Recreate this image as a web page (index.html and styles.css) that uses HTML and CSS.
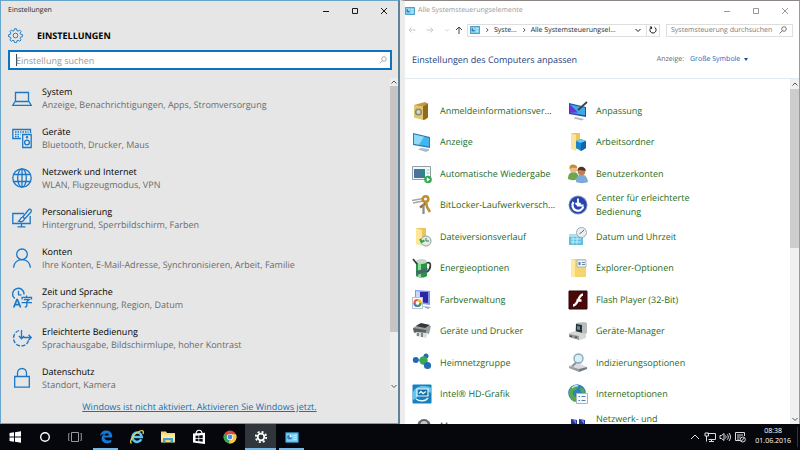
FILE: index.html
```html
<!DOCTYPE html>
<html lang="de">
<head>
  <meta charset="UTF-8">
  <title>Einstellungen</title>
  <meta name="viewport" content="width=device-width, initial-scale=1.0">
  <link rel="stylesheet" href="styles.css">
</head>
<body>

  <!-- Shared symbols -->
  <svg class="defs" aria-hidden="true">
    <symbol id="i-min" viewBox="0 0 8 8"><path d="M1 4.5h6" /></symbol>
    <symbol id="i-max" viewBox="0 0 8 8"><path d="M1.5 1.5h5v5h-5z" /></symbol>
    <symbol id="i-close" viewBox="0 0 8 8"><path d="M1 1l6 6M7 1L1 7" /></symbol>
    <symbol id="i-up" viewBox="0 0 8 8"><path d="M1.5 5.5L4 3l2.500 2.500" /></symbol>
    <symbol id="i-down" viewBox="0 0 8 8"><path d="M1.500 3L4 5.500 6.500 3" /></symbol>
    <symbol id="i-right" viewBox="0 0 8 8"><path d="M3 1.500L5.500 4 3 6.500" /></symbol>
    <symbol id="i-search" viewBox="0 0 8 8"><circle cx="5" cy="3" r="2.300" /><path d="M3.400 4.700L.7 7.400" /></symbol>
    <symbol id="i-panel" viewBox="0 0 20 16">
      <rect x=".5" y=".5" width="19" height="15" rx="1" fill="#3fa9da" stroke="#256f9b" />
      <rect x="2" y="2" width="16" height="12" fill="#7fd0ee" />
      <circle cx="6.500" cy="7.500" r="3.500" fill="#2c7fb8" /><path d="M6.500 7.500V4a3.500 3.500 0 0 1 3.500 3.500z" fill="#fff" />
      <path d="M12 5h5M12 8h5M12 11h5" stroke="#d8f1fb" stroke-width="1.200" />
    </symbol>
    <symbol id="i-gear" viewBox="0 0 16 16">
      <path d="M6.900.8h2.200l.4 2 1.300.5 1.700-1.100 1.500 1.500-1.100 1.700.5 1.300 2 .4v2.200l-2 .4-.5 1.300 1.100 1.700-1.500 1.500-1.700-1.100-1.300.5-.4 2H6.900l-.4-2-1.300-.5-1.700 1.100L2 12.700 3.100 11l-.5-1.300-2-.4V7.100l2-.4.5-1.300L2 3.700l1.500-1.500 1.700 1.100 1.300-.5z" />
      <circle cx="8" cy="8" r="2.500" />
    </symbol>
  </svg>

  <main class="desktop">

    <!-- Settings window -->
    <section class="window settings">
      <div class="titlebar">
        <span class="title">Einstellungen</span>
        <div class="controls">
          <button aria-label="Minimieren"><svg><use href="#i-min" /></svg></button>
          <button aria-label="Maximieren"><svg><use href="#i-max" /></svg></button>
          <button aria-label="Schließen"><svg><use href="#i-close" /></svg></button>
        </div>
      </div>

      <div class="settings-head">
        <svg class="gear"><use href="#i-gear" /></svg>
        <h1>EINSTELLUNGEN</h1>
      </div>

      <label class="settings-search">
        <input type="text" placeholder="Einstellung suchen" aria-label="Einstellung suchen">
        <svg><use href="#i-search" /></svg>
      </label>

      <div class="settings-body">
        <nav class="settings-list">
          <a href="#" class="setting">
            <svg viewBox="0 0 20 20"><path d="M3.500 4.500h13v9h-13zM3 13.500L.8 17.300h18.400L17 13.500" /></svg>
            <span><b>System</b><small>Anzeige, Benachrichtigungen, Apps, Stromversorgung</small></span>
          </a>
          <a href="#" class="setting">
            <svg viewBox="0 0 20 20"><path d="M9 10.500H.8v-9h17.700V5" /><path d="M3 4h13.500M3 6.500h5.500M3 8.700h5" stroke-dasharray="1.500 1" /><path d="M10.700 6.500h8.500v13h-8.500z" /><circle cx="15" cy="14.500" r="2.400" /><circle cx="15" cy="9.200" r=".6" /></svg>
            <span><b>Geräte</b><small>Bluetooth, Drucker, Maus</small></span>
          </a>
          <a href="#" class="setting">
            <svg viewBox="0 0 20 20"><circle cx="10" cy="10" r="9.200" /><ellipse cx="10" cy="10" rx="4.300" ry="9.200" /><path d="M10 .8v18.400M1.800 6.500h16.400M1.800 13.500h16.400" /></svg>
            <span><b>Netzwerk und Internet</b><small>WLAN, Flugzeugmodus, VPN</small></span>
          </a>
          <a href="#" class="setting">
            <svg viewBox="0 0 20 20"><path d="M12 5.500H.8v10h17.400V8M9.500 15.500v3M5.500 18.800h8" /><path d="M18.800 1.500c-.9-.8-1.700-.2-2.300.5l-5.700 6.800 2 1.900 6-6.500c.8-.9.700-2 0-2.700z" /><path d="M10.600 9.300c-2.600-.3-2 3-4 3.900 2.500 1.300 5.700.2 5.700-2.400" /></svg>
            <span><b>Personalisierung</b><small>Hintergrund, Sperrbildschirm, Farben</small></span>
          </a>
          <a href="#" class="setting">
            <svg viewBox="0 0 20 20"><circle cx="10" cy="6.300" r="5.300" /><path d="M1.500 19.700c.5-5 4-8.100 8.500-8.100s8 3.100 8.500 8.100" /></svg>
            <span><b>Konten</b><small>Ihre Konten, E-Mail-Adresse, Synchronisieren, Arbeit, Familie</small></span>
          </a>
          <a href="#" class="setting">
            <svg viewBox="0 0 20 20"><path d="M2.800 10.500A5.700 5.700 0 1 1 12 6.500M6.500 2.800v4h3" /><path d="M1.700 19.500l3.200-8h.5l3.200 8M3 16.700h4.500" stroke-width="1.700" /><path d="M14.500 7.500V9M10 11.500V9.300h9.500v2.200M11.800 11.500h5.500l-2.500 2.200v4.300c0 .9-.6 1-2 1M9.500 14.700H20" /></svg>
            <span><b>Zeit und Sprache</b><small>Spracherkennung, Region, Datum</small></span>
          </a>
          <a href="#" class="setting">
            <svg viewBox="0 0 20 20"><path d="M7 2.500A8 8 0 0 0 8.500 18c4 .2 7-2 8-5.500" stroke-dasharray="4 1.500" /><path d="M9.500 2v8.500M7 8l2.500 2.700L12 8M11.500 9.500h8M16.500 6.800l2.700 2.700-2.700 2.700" /></svg>
            <span><b>Erleichterte Bedienung</b><small>Sprachausgabe, Bildschirmlupe, hoher Kontrast</small></span>
          </a>
          <a href="#" class="setting">
            <svg viewBox="0 0 20 20"><path d="M2.700 8.500h14.600v10.700H2.700zM5.500 8.500V5a4.500 4.500 0 0 1 9 0v3.500" /></svg>
            <span><b>Datenschutz</b><small>Standort, Kamera</small></span>
          </a>
        </nav>
        <div class="scrollbar">
          <svg><use href="#i-up" /></svg>
          <div class="track"><div class="thumb"></div></div>
          <svg><use href="#i-down" /></svg>
        </div>
      </div>

      <footer class="activate"><a href="#">Windows ist nicht aktiviert. Aktivieren Sie Windows jetzt.</a></footer>
    </section>

    <!-- Control panel window -->
    <section class="window panel">
      <div class="titlebar">
        <svg class="panel-icon"><use href="#i-panel" /></svg>
        <span class="title">Alle Systemsteuerungselemente</span>
        <div class="controls">
          <button aria-label="Minimieren"><svg><use href="#i-min" /></svg></button>
          <button aria-label="Maximieren"><svg><use href="#i-max" /></svg></button>
          <button aria-label="Schließen"><svg><use href="#i-close" /></svg></button>
        </div>
      </div>

      <div class="toolbar">
        <div class="history">
          <button aria-label="Zurück"><svg viewBox="0 0 8 8"><path d="M7.500 4H1M3.500 1.500L1 4l2.500 2.500" /></svg></button>
          <button aria-label="Vorwärts"><svg viewBox="0 0 8 8"><path d="M.5 4H7M4.500 1.500L7 4 4.500 6.500" /></svg></button>
          <button class="recent" aria-label="Verlauf"><svg><use href="#i-down" /></svg></button>
          <button class="go-up" aria-label="Nach oben"><svg viewBox="0 0 8 8"><path d="M4 8V1M1 4l3-3 3 3" /></svg></button>
        </div>
        <div class="address">
          <svg class="panel-icon"><use href="#i-panel" /></svg>
          <svg class="sep"><use href="#i-right" /></svg>
          <span>Syste...</span>
          <svg class="sep"><use href="#i-right" /></svg>
          <span>Alle Systemsteuerungsel...</span>
          <button class="drop" aria-label="Adressliste"><svg><use href="#i-down" /></svg></button>
          <button class="reload" aria-label="Aktualisieren"><svg viewBox="0 0 8 8"><path d="M5.500 1.200A3.100 3.100 0 1 1 2.300 1.300M2.600 3V1H.8" /></svg></button>
        </div>
        <label class="panel-search">
          <input type="text" placeholder="Systemsteuerung durchsuchen" aria-label="Systemsteuerung durchsuchen">
          <svg><use href="#i-search" /></svg>
        </label>
      </div>

      <div class="panel-head">
        <h2>Einstellungen des Computers anpassen</h2>
        <div class="view">
          <label for="view">Anzeige:</label>
          <select id="view"><option>Große Symbole</option></select>
          <span class="caret"></span>
        </div>
      </div>

      <div class="panel-body">
        <div class="items">
          <a href="#">
            <svg viewBox="0 0 20 20"><path d="M2 4l11-3 3 1.500v14L13 19 2 16z" fill="#c39a3c" /><path d="M2 4l9 1.500V19L2 16.500z" fill="#e3c56e" /><path d="M11 5.500l5-3v14L11 19z" fill="#8f6b22" /><circle cx="6.500" cy="11" r="3.600" fill="#8b8778" /><circle cx="6.500" cy="11" r="2" fill="#ded8c0" /></svg>
            <span>Anmeldeinformationsver...</span>
          </a>
          <a href="#">
            <svg viewBox="0 0 20 20"><path d="M1 2l17 4v10L1 13z" fill="#234fae" /><path d="M2 3.500l15 3.300v7.500L2 11.800z" fill="#3daae8" /><path d="M2 3.500l8 8-8 .3z" fill="#7131d2" /><path d="M7 16l9 2-2 1.500-8-2z" fill="#aeb7c0" /><path d="M19 1l-9 8" stroke="#3d414b" stroke-width="1.800" /></svg>
            <span>Anpassung</span>
          </a>
          <a href="#">
            <svg viewBox="0 0 20 20"><path d="M1 1l17 4v11L1 13z" fill="#2b7cba" /><path d="M2 2.500l15 3.500v8.500L2 11.800z" fill="#42b7ed" /><path d="M2 2.500l10 2.300-5 7.900-5-.9z" fill="#8ddafa" /><path d="M9 16l8 1v1.500L14 20l-8-2.500z" fill="#a6bfce" /></svg>
            <span>Anzeige</span>
          </a>
          <a href="#">
            <svg viewBox="0 0 20 20"><path d="M3 1h9v16H3z" fill="#edc55c" /><path d="M3 1l5 2v16l-5-2z" fill="#fce49a" /><path d="M8 9l5-2 5 2v7l-5 3-5-3z" fill="#1786cf" /><path d="M8 9l5 2 5-2-5-2z" fill="#6bc8f4" /><path d="M13 11v8l5-3V9z" fill="#1263a7" /></svg>
            <span>Arbeitsordner</span>
          </a>
          <a href="#">
            <svg viewBox="0 0 20 20"><path d="M.5 2.500h18v13H.5z" fill="#f4f7f7" stroke="#92a0a6" /><path d="M2 5h11v9H2z" fill="#2d8588" /><path d="M2 5h4l5 9H2z" fill="#4a729e" /><path d="M14.500 6h3M14.500 9h3" stroke="#b1bec5" /><circle cx="16" cy="15.500" r="3.800" fill="#34a853" /><path d="M14.800 13.300v4.400l3.200-2.200z" fill="#fff" /></svg>
            <span>Automatische Wiedergabe</span>
          </a>
          <a href="#">
            <svg viewBox="0 0 20 20"><path d="M0 15c0-5 2-7 5.500-7s5 2 5 7c-3 1.500-8 1.500-10.500 0z" fill="#6fa64d" /><circle cx="5.500" cy="5" r="3.800" fill="#e7bc8c" /><path d="M1.500 5C1 1 4 0 6.500.7S9.500 3 9 4C6 4 4 3 1.500 5z" fill="#c68e31" /><path d="M8 18c0-5 2-7.500 5.500-7.500S19.500 13 20 18c-3 1.500-9 1.500-12 0z" fill="#7eaadb" /><circle cx="13.500" cy="7.500" r="3.800" fill="#bd8057" /><path d="M9.500 7c0-4 3-5 5.500-4s3 3 2.500 4c-3 0-5-2-8 0z" fill="#513326" /></svg>
            <span>Benutzerkonten</span>
          </a>
          <a href="#">
            <svg viewBox="0 0 20 20"><path d="M0 5.500l11-2M1 8l10-2" stroke="#a8a59b" stroke-width="1.700" /><circle cx="13.500" cy="4" r="2.800" fill="none" stroke="#c08c2c" stroke-width="2.500" /><path d="M14 8l-6 4.500" fill="none" stroke="#a26a1c" stroke-width="2.300" /><path d="M11.500 9v10" stroke="#858b90" stroke-width="2.200" /><path d="M14 7l1 5 3 5" stroke="#c2902f" fill="none" stroke-width="2.500" /></svg>
            <span>BitLocker-Laufwerkversch...</span>
          </a>
          <a href="#">
            <svg viewBox="0 0 20 20"><circle cx="10" cy="10" r="9.500" fill="#8794bd" /><circle cx="10" cy="10" r="8.600" fill="#2544ad" /><path d="M5.500 7A5.500 5.500 0 1 0 15.300 11.500" fill="none" stroke="#fff" stroke-width="2.200" /><path d="M10 3.500v7h5.500M7.500 8l2.500 2.500L12.500 8" fill="none" stroke="#fff" stroke-width="1.800" /></svg>
            <span>Center für erleichterte Bedienung</span>
          </a>
          <a href="#">
            <svg viewBox="0 0 20 20"><path d="M4 1h10v16H4z" fill="#ebc45c" /><path d="M4 1l6 2v16l-6-2z" fill="#ffe69a" /><circle cx="14" cy="14" r="5" fill="#e2ede6" stroke="#8da19a" /><path d="M14 11v3h3" fill="none" stroke="#4c6e70" /><path d="M8 12l1.500 3 3-1.500" fill="none" stroke="#35a447" stroke-width="2" /></svg>
            <span>Dateiversionsverlauf</span>
          </a>
          <a href="#">
            <svg viewBox="0 0 20 20"><path d="M1 7h14v11H1z" fill="#63bfe0" /><path d="M1 7h14v3H1z" fill="#a4e1f3" /><path d="M3 12h10M3 15h10M5 10v7M9 10v7" stroke="#c6edf8" /><circle cx="13.500" cy="5.500" r="5" fill="#e9eef0" stroke="#9fabb3" /><path d="M13.500 5.500L16 3M13.500 5.500l-2 1" stroke="#58656d" /></svg>
            <span>Datum und Uhrzeit</span>
          </a>
          <a href="#">
            <svg viewBox="0 0 20 20"><path d="M4 4c3-2 8-2 11 0v14c-3 2-8 2-11 0z" fill="#279544" /><path d="M6 4h3v15H6z" fill="#8bdb9a" /><ellipse cx="9.500" cy="3.500" rx="5.500" ry="2.500" fill="#c8d3ca" /><path d="M15 5c5-2 4 6 0 9M1 1l4 5" fill="none" stroke="#303b35" stroke-width="1.700" /><path d="M4 13l12-3-2 4-9 3z" fill="#4b6470" /></svg>
            <span>Energieoptionen</span>
          </a>
          <a href="#">
            <svg viewBox="0 0 20 20"><path d="M3 1h15v18H3z" fill="#f3d672" /><path d="M3 1l4 1v17H3z" fill="#ffe99c" /><path d="M9 2h9v7H9z" fill="#f1f5f8" stroke="#9dabb5" stroke-width=".8" /><path d="M10.500 4h2v3h-2z" fill="#3e84b9" /><path d="M14 4.500h3M14 6.500h3" stroke="#718391" /></svg>
            <span>Explorer-Optionen</span>
          </a>
          <a href="#">
            <svg viewBox="0 0 20 20"><path d="M3 0l15 1v14L3 13z" fill="#7d97ea" /><path d="M4 1l5 1v10H4z" fill="#cbd6fa" /><path d="M8 2l8 0v11l-8-1z" fill="#2c25a5" /><path d="M10 16l9 1-3 2z" fill="#9aa7b2" /><rect x=".5" y="7.500" width="10" height="11" fill="#fff" stroke="#b9c1cc" /><circle cx="5.500" cy="13" r="3" fill="none" stroke="#e95342" stroke-width="2" /><path d="M5.500 10a3 3 0 0 1 3 3" fill="none" stroke="#f4c51e" stroke-width="2" /><path d="M8.500 13a3 3 0 0 1-3 3" fill="none" stroke="#2aa867" stroke-width="2" /><path d="M5.500 16a3 3 0 0 1-3-3" fill="none" stroke="#3a83e5" stroke-width="2" /></svg>
            <span>Farbverwaltung</span>
          </a>
          <a href="#">
            <svg viewBox="0 0 20 20"><path d="M1 1h18v18H1z" fill="#4b0808" stroke="#27090a" /><path d="M15 4.500c-5 0-4.500 11-10 11M8.500 10.500h5" fill="none" stroke="#fff" stroke-width="2.300" /></svg>
            <span>Flash Player (32-Bit)</span>
          </a>
          <a href="#">
            <svg viewBox="0 0 20 20"><path d="M1 7l6-4 12 2-2 8-15-1z" fill="#9b9e9f" /><path d="M4 5l5-3 9 2-5 3z" fill="#34383a" /><path d="M1 7l13 2v4L2 11z" fill="#5a5f61" /><path d="M4 11l12 1-2 5-10-2z" fill="#d9dcdd" /><path d="M6 12v3M10 12v4" stroke="#62676a" stroke-width="1.500" /></svg>
            <span>Geräte und Drucker</span>
          </a>
          <a href="#">
            <svg viewBox="0 0 20 20"><path d="M8 2l8-1 3 1v10l-4 2-8-2z" fill="#b9bdbd" /><path d="M8 3l6 1v8l-6-1z" fill="#263236" /><path d="M9 5l3 .5V9L9 8.500z" fill="#5c938f" /><path d="M1 12l6-2 11 3v4l-6 2-11-3z" fill="#d4d7d7" /><path d="M1 13l10 2v4L1 16z" fill="#92999a" /><path d="M3 14.500v1.500M8 15.500V17" stroke="#333b3c" stroke-width="1.500" /></svg>
            <span>Geräte-Manager</span>
          </a>
          <a href="#">
            <svg viewBox="0 0 20 20"><path d="M4 7l7 0 4 5M11 7l3-4" fill="none" stroke="#9baab2" stroke-width="1.500" /><circle cx="3.800" cy="7" r="3" fill="#2368b5" /><circle cx="14" cy="3" r="2.500" fill="#296aa8" /><circle cx="11.500" cy="7.500" r="4.200" fill="#37a855" /><circle cx="15.500" cy="12.500" r="3.600" fill="#246bb3" /></svg>
            <span>Heimnetzgruppe</span>
          </a>
          <a href="#">
            <svg viewBox="0 0 20 20"><path d="M1 13l9-3 9 4-8 4z" fill="#d8dcde" /><path d="M1 13l10 3v3L1 15z" fill="#969ea3" /><path d="M11 16l8-2v2l-8 3z" fill="#717b81" /><circle cx="10.500" cy="5.500" r="4.500" fill="#d6eff9" stroke="#83a5b7" stroke-width="1.300" /><path d="M8 9.500l-4 4" stroke="#86959d" stroke-width="2" /></svg>
            <span>Indizierungsoptionen</span>
          </a>
          <a href="#">
            <svg viewBox="0 0 20 20"><rect x=".5" y=".5" width="19" height="19" rx="1" fill="#1681bf" /><path d="M1 8C4 1 15 1 19 4v5c-5-4-13-2-14 5l-4 2z" fill="#63c7ec" /><path d="M5 5h11v7H5z" fill="#176ca4" stroke="#e9f7ff" stroke-width="1.200" /><path d="M7 9.500l2-2 2 2 3-2M4 15c4 3 10 2 12-1" fill="none" stroke="#e9f7ff" stroke-width="1.400" /></svg>
            <span>Intel® HD-Grafik</span>
          </a>
          <a href="#">
            <svg viewBox="0 0 20 20"><circle cx="9" cy="9" r="8.800" fill="#2e80bf" /><path d="M3 3c3-2 6-3 7-1l-2 4-3 1v4l4 3-2 4C1 16-1 8 3 3zM12 3l4 2 1 5-4-2z" fill="#56aa4b" /><path d="M4 4c2-2 4-3 6-2" fill="none" stroke="#bfe3ef" stroke-width="1.500" /><path d="M8.500 9.500h11v10h-11z" fill="#f8fafb" stroke="#a8b6c1" /><path d="M10.500 12.500h1.500M10.500 16.500h1.500M13.500 12.500h4M13.500 16.500h4" stroke="#4c83ac" /></svg>
            <span>Internetoptionen</span>
          </a>
          <a href="#">
            <svg viewBox="0 0 20 20"><ellipse cx="12" cy="11" rx="7" ry="8" fill="#5e666b" /><ellipse cx="12" cy="8" rx="3.500" ry="3" fill="#c2c8cb" /></svg>
            <span>Maus</span>
          </a>
          <a href="#">
            <svg viewBox="0 0 20 20"><path d="M3 3l6 1v7l-6-1zM11 3l6 1v7l-6-1z" fill="#20349c" /><path d="M5 4l3 .5V8zM13 4l3 .5V8z" fill="#7790e2" /><path d="M1 12h17v3H1z" fill="#8992a5" /></svg>
            <span>Netzwerk- und Freigabecenter</span>
          </a>
        </div>
        <div class="scrollbar">
          <svg><use href="#i-up" /></svg>
          <div class="track"><div class="thumb"></div></div>
          <svg><use href="#i-down" /></svg>
        </div>
      </div>
    </section>
  </main>

  <!-- Taskbar -->
  <footer class="taskbar">
    <div class="apps">
      <button aria-label="Start"><svg viewBox="0 0 16 16"><path d="M2.500 4L7 3.300v4.200H2.500zM8 3.200l6-.9v5.200H8zM2.500 8.500H7v4.200L2.500 12zM8 8.500h6v5.200l-6-.9z" fill="#fff" /></svg></button>
      <button aria-label="Cortana"><svg viewBox="0 0 16 16"><circle cx="8" cy="8" r="4.300" fill="none" stroke="#fff" stroke-width="1.400" /></svg></button>
      <button aria-label="Taskansicht"><svg viewBox="0 0 16 16"><path d="M4.500 3.500h7v9h-7zM2.500 4.500h-.8v7h.8M13.500 4.500h.8v7h-.8" fill="none" stroke="#999" /></svg></button>
      <button class="app open" aria-label="Edge"><svg viewBox="0 0 16 16"><path d="M2 7C2.500 3.500 5 1.500 8.500 1.500c4 0 6 3 5.700 7H6.300c.3 3.300 4.300 3.700 7 2.200v2.600C8.500 16 3.500 13.500 3.600 9.600c0-2 1.100-3.600 2.800-4.600C4.500 5 3 5.700 2 7zm4.500-.6h4.300C10.800 3.500 6.900 3.700 6.500 6.400z" fill="#1578d4" /></svg></button>
      <button class="app" aria-label="Internet Explorer"><svg viewBox="0 0 16 16"><path d="M12.300 10.300A4.700 4.700 0 1 1 12.800 8H4.500" fill="none" stroke="#5bc6ef" stroke-width="2.500" /><path d="M2.500 14.500C-.5 12 5.500 4 11 2c3-1 4 0 3 3" fill="none" stroke="#f2d94d" stroke-width="1.300" /></svg></button>
      <button class="app" aria-label="Explorer"><svg viewBox="0 0 16 16"><path d="M1 2.500h5l1 1.500h8v9.500H1z" fill="#f7d66f" /><path d="M1 5.500h14v5H1z" fill="#ffe9a2" /><path d="M3 9h10v4.500h-2.500V11h-5v2.500H3z" fill="#39a4d7" /></svg></button>
      <button class="app" aria-label="Store"><svg viewBox="0 0 16 16"><path d="M5 5c0-5 6-5 6 0" fill="none" stroke="#fff" stroke-width="1.200" /><path d="M2 4.500l12-.8V15L2 13.500z" fill="#fff" /><path d="M4.500 6.800L7.500 6.500V9h-3zM8.200 6.500l3.500-.4V9H8.200zM4.500 9.700h3v2.600l-3-.3zM8.200 9.700h3.500v3l-3.500-.4z" fill="#090b10" /></svg></button>
      <button class="app" aria-label="Chrome"><svg viewBox="0 0 16 16"><circle cx="8" cy="8" r="6.500" fill="#dd4b3e" /><path d="M8 8L2.300 4.900A6.500 6.500 0 0 0 7 14.400z" fill="#35a853" /><path d="M8 8L7 14.400A6.500 6.500 0 0 0 13.900 5.300H8z" fill="#f9cb3c" /><circle cx="8" cy="8" r="3.100" fill="#fff" /><circle cx="8" cy="8" r="2.400" fill="#478bee" /></svg></button>
      <button class="app open active" aria-label="Einstellungen"><svg viewBox="0 0 16 16"><circle cx="8" cy="8" r="3.300" fill="none" stroke="#fff" stroke-width="1.800" /><circle cx="8" cy="8" r="5.200" fill="none" stroke="#fff" stroke-width="1.800" stroke-dasharray="2.040 2.040" /></svg></button>
      <button class="app open" aria-label="Systemsteuerung"><svg class="task-panel"><use href="#i-panel" /></svg></button>
    </div>
    <div class="tray">
      <button aria-label="Ausgeblendete Symbole"><svg viewBox="0 0 12 12"><path d="M2 8l4-4 4 4" /></svg></button>
      <button aria-label="Netzwerk"><svg viewBox="0 0 12 12"><path d="M3.500 2.500h8v6h-7M7.500 8.500v2M5 10.500h5M1 2h3.500v3H1zM2.500 5v5.500" /></svg></button>
      <button aria-label="Lautstärke"><svg viewBox="0 0 12 12"><path d="M1 4.500h1.500L5 2.500v7L2.500 7.500H1zM6.500 4.500c.8 1 .8 2 0 3M8.200 3.300c1.500 1.800 1.500 3.600 0 5.400M10 2c2 2.700 2 5.300 0 8" /></svg></button>
      <button aria-label="Info-Center"><svg viewBox="0 0 12 12"><path d="M6 9.500H1.500v-8h9V5M3 4h6M3 6h3.500M3 8h2.500" /><circle cx="8.800" cy="8.500" r="2.500" /><path d="M7.200 10.200l3.200-3.400" /></svg></button>
      <time class="clock"><span>08:38</span><span>01.06.2016</span></time>
    </div>
  </footer>

</body>
</html>
```
FILE: styles.css
```css
* { box-sizing: border-box; margin: 0; padding: 0; }

body {
  font-family: "Segoe UI", "Open Sans", "Noto Sans", sans-serif;
  font-size: 9px;
  text-rendering: geometricPrecision;
  height: 100vh;
  display: flex;
  flex-direction: column;
  overflow: hidden;
  background: #05070c;
  color: #1a1a1a;
}

a { color: inherit; text-decoration: none; }
button { background: none; border: none; font: inherit; color: inherit; }
input, select { font: inherit; text-rendering: inherit; border: none; outline: none; background: none; min-width: 0; }
svg { display: block; flex: none; width: 8px; height: 8px; overflow: visible; }

.defs { position: absolute; width: 0; height: 0; }

.desktop {
  flex: 1;
  min-height: 0;
  display: flex;
}

.window {
  width: 50%;
  display: flex;
  flex-direction: column;
}

.titlebar {
  display: flex;
  align-items: center;
  height: 19px;
  flex: none;
}

.title { font-size: 7px; flex: 1; }

.controls { display: flex; }

.controls button {
  width: 29px;
  height: 18px;
  display: grid;
  place-items: center;
}

.controls svg, .history svg, .sep, .drop svg, .reload svg, .panel-search svg, .settings-search svg {
  fill: none;
  stroke: currentColor;
}

/* Settings */
.settings {
  background: #e6e6e6;
  border: 1px solid #6aa3c8;
  border-right: 2px solid #5f8299;
}

.settings .titlebar { padding-left: 7px; }

.settings-head {
  display: flex;
  align-items: center;
  gap: 14px;
  height: 30px;
  padding-left: 7px;
}

.gear {
  width: 15px;
  height: 15px;
  fill: none;
  stroke: #1a78c8;
}

h1 { font-size: 9px; font-weight: 700; color: #000; }

.settings-search {
  display: flex;
  align-items: center;
  height: 20px;
  margin: 0 6px 0 7px;
  padding-right: 3px;
  background: #fff;
  border: 2px solid #0f74be;
  color: #aaa;
  flex: none;
}

.settings-search input {
  flex: 1;
  height: 16px;
  font-size: 9px;
  padding-left: 6px;
  background: linear-gradient(#444, #444) 6px center / 1px 12px no-repeat;
}

input::placeholder { color: #999; opacity: 1; }

.settings-body {
  flex: 1;
  min-height: 0;
  display: flex;
  margin-top: 8px;
}

.settings-list {
  flex: 1;
  overflow: hidden;
}

.setting {
  display: flex;
  align-items: center;
  gap: 10px;
  height: 40px;
  padding-left: 11px;
}

.setting svg {
  width: 20px;
  height: 20px;
  fill: none;
  stroke: #1a78c8;
  stroke-width: 1.3;
}

.setting b, .setting small {
  display: block;
  font-size: 9px;
  font-weight: normal;
  line-height: 13px;
  color: #000;
}

.setting small { color: #6b6b6b; }

.scrollbar {
  display: flex;
  flex-direction: column;
  align-items: center;
  width: 8px;
  background: #ededed;
}

.scrollbar svg { fill: none; stroke: #555; }

.track { flex: 1; width: 100%; }

.thumb { background: #c6c4c4; }

.settings .thumb { height: 83%; }

.activate {
  height: 33px;
  display: grid;
  place-items: center;
  flex: none;
}

.activate a { color: #1a70b0; text-decoration: underline; }

/* Control panel */
.panel {
  background: #fff;
  border-top: 1px solid #8d8684;
  border-right: 1px solid #999;
  border-left: 5px solid #ececec;
}

.panel .titlebar { color: #999; gap: 3px; }

.panel-icon { width: 10px; height: 8px; }

.toolbar {
  display: flex;
  align-items: center;
  height: 20px;
  padding-right: 6px;
}

.history {
  display: flex;
  align-items: center;
  width: 62px;
  padding-left: 3px;
  gap: 10px;
  color: #c8c8c8;
}

.history .recent svg { width: 6px; }
.history .recent { margin-right: -5px; }
.history .go-up { color: #444; }

.address {
  flex: 1;
  min-width: 0;
  display: flex;
  align-items: center;
  height: 13px;
  border: 1px solid #dedede;
  padding-left: 2px;
  font-size: 7px;
  white-space: nowrap;
}

.sep { width: 6px; height: 6px; margin: 0 4px; }

.drop { margin-left: auto; padding-right: 4px; }

.reload { border-left: 1px solid #dedede; padding: 2px; }

.panel-search {
  display: flex;
  align-items: center;
  width: 127px;
  height: 13px;
  margin-left: 6px;
  padding: 0 5px 0 4px;
  border: 1px solid #dedede;
  color: #777;
}

.panel-search input { flex: 1; height: 11px; font-size: 7px; }
.panel-search input::placeholder { color: #777; }

.panel-head {
  display: flex;
  align-items: center;
  justify-content: space-between;
  height: 39px;
  padding: 0 51px 0 7px;
  border-bottom: 1px solid #e1ebf2;
  flex: none;
}

h2 { font-size: 9px; font-weight: normal; color: #24437f; }

.view {
  display: flex;
  align-items: center;
  font-size: 7px;
  color: #666;
}

.view select {
  appearance: none;
  color: #1a66bd;
  margin: 0 3px 0 6px;
}

.caret {
  border: 2px solid transparent;
  border-top: 3px solid #1a4f8f;
  border-bottom: none;
}

.panel-body {
  flex: 1;
  min-height: 0;
  display: flex;
}

.items {
  flex: 1;
  display: grid;
  grid-template-columns: 156px 122px;
  grid-template-rows: repeat(6, 31px 32px);
  padding: 16px 0 0 7px;
  overflow: hidden;
}

.items a {
  display: flex;
  align-items: center;
  gap: 8px;
  color: #1e6b26;
  line-height: 14px;
}

.items svg { width: 20px; height: 20px; }

.panel .scrollbar { width: 9px; background: #f0f0f0; }
.panel .scrollbar svg { margin: 1px 0; }
.panel .thumb { height: 49%; background: #cdcdcd; }

/* Taskbar */
.taskbar {
  display: flex;
  justify-content: space-between;
  height: 26px;
  flex: none;
  background: #05070c;
  color: #fff;
}

.apps, .tray { display: flex; align-items: center; }

.apps button {
  display: grid;
  place-items: center;
  width: 30px;
  height: 26px;
}

.apps svg { width: 16px; height: 16px; }

.apps .app { width: 31px; }

.apps .open {
  background: linear-gradient(#76b9ed, #76b9ed) center bottom / 25px 2px no-repeat;
}

.apps .active {
  background: linear-gradient(#76b9ed, #76b9ed) center bottom / 31px 2px no-repeat #31363c;
}

.apps .task-panel { width: 14px; height: 11px; }

.tray { gap: 3px; padding-right: 2px; }

.tray svg {
  width: 12px;
  height: 12px;
  fill: none;
  stroke: #ddd;
}

.clock {
  display: flex;
  flex-direction: column;
  align-items: center;
  font-size: 7px;
  line-height: 10px;
  padding: 0 6px;
  border-right: 1px solid #30343a;
}
```
